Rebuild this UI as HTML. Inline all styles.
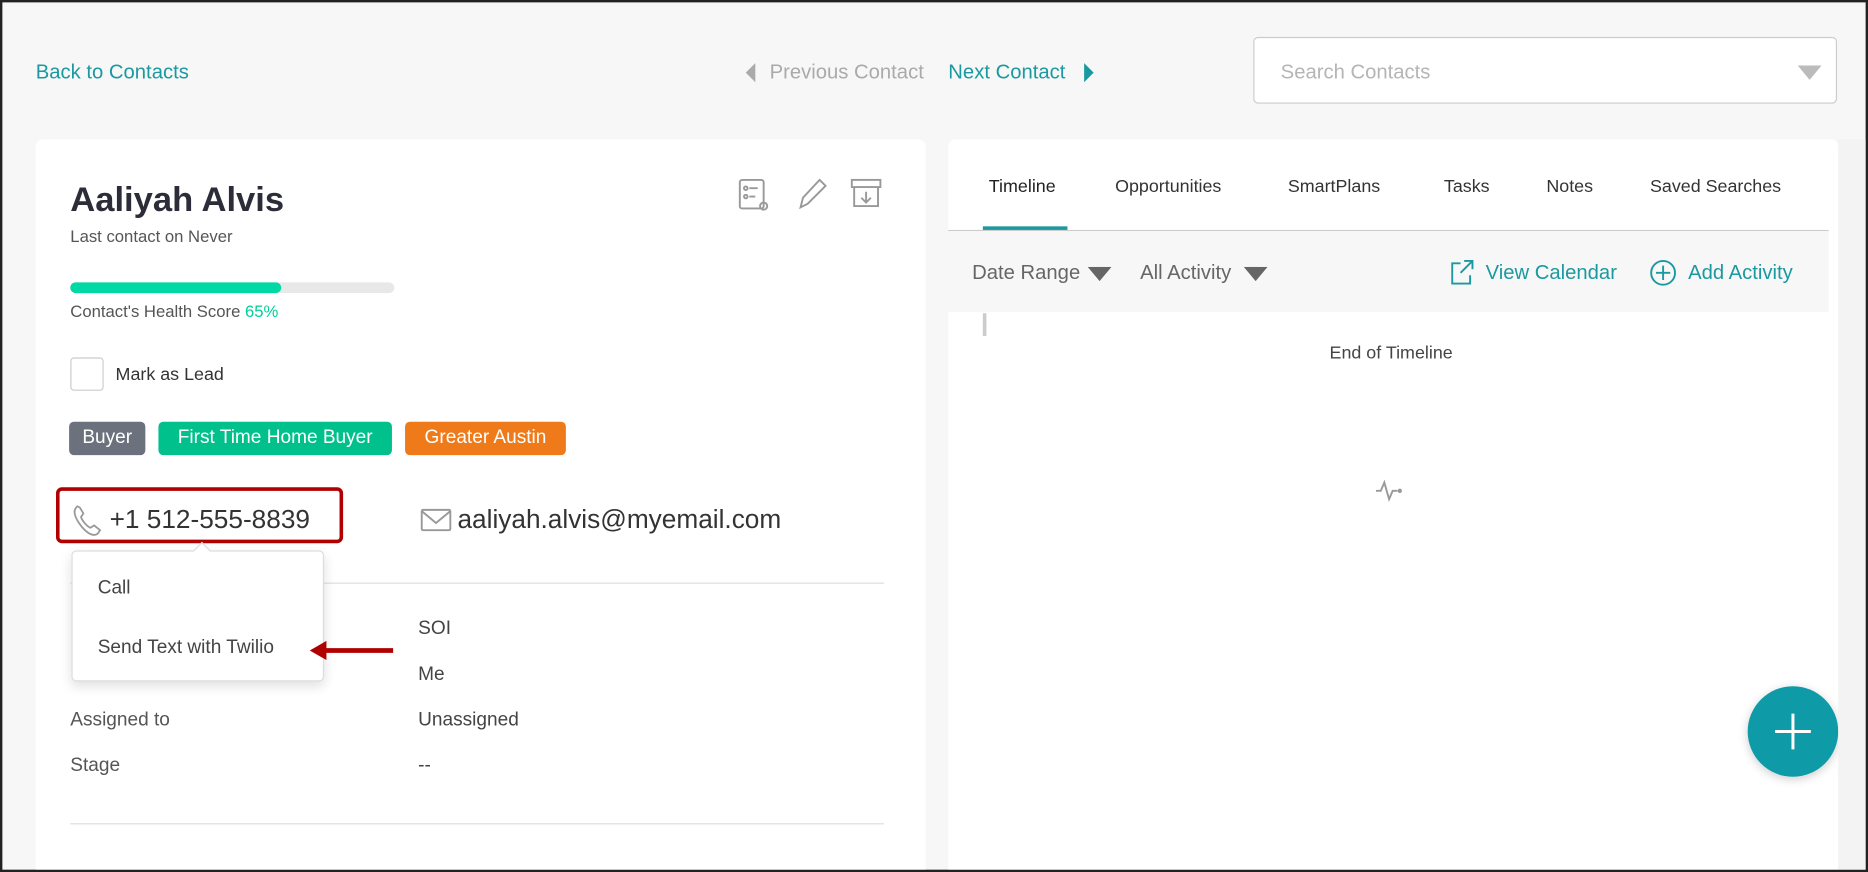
<!DOCTYPE html>
<html><head><meta charset="utf-8"><style>
html,body{margin:0;padding:0;width:1868px;height:872px;overflow:hidden;background:#f7f7f7}
#w{position:absolute;left:0;top:0;width:1568px;height:732px;transform:scale(1.19133);transform-origin:0 0;background:#f7f7f7;font-family:"Liberation Sans",sans-serif;box-sizing:border-box;border:2px solid #222;overflow:hidden}
.a{position:absolute;white-space:nowrap}
.t{color:#1a9aa0}
.card{position:absolute;background:#fff;border-radius:6px}
.tag{position:absolute;top:352px;height:28px;color:#fff;font-size:16px;border-radius:4px;box-sizing:border-box;display:flex;align-items:center;justify-content:center}
.lbl{font-size:16px;color:#555}
.tab{position:absolute;top:146px;font-size:15px;color:#333}
</style></head><body><div id="w">
<div class="a t" style="left:28px;top:49px;font-size:17px">Back to Contacts</div>
<svg class="a" style="left:622px;top:50px" width="12" height="18"><path d="M10 1L2 9l8 8z" fill="#aaa"/></svg>
<div class="a" style="left:644px;top:49px;font-size:17px;color:#aaa">Previous Contact</div>
<div class="a t" style="left:794px;top:49px;font-size:17px">Next Contact</div>
<svg class="a" style="left:906px;top:50px" width="12" height="18"><path d="M2 1l8 8-8 8z" fill="#1a9aa0"/></svg>
<div class="a" style="left:1050px;top:29px;width:490px;height:56px;background:#fff;border:1px solid #ccc;border-radius:4px;box-sizing:border-box"></div>
<div class="a" style="left:1073px;top:49px;font-size:17px;color:#b5b5b5">Search Contacts</div>
<svg class="a" style="left:1507px;top:53px" width="20" height="12"><path d="M0 0h20L10 12z" fill="#bbb"/></svg>

<div class="card" style="left:28px;top:115px;width:747px;height:640px"></div>
<div class="card" style="left:794px;top:115px;width:747px;height:640px"></div>

<div class="a" style="left:57px;top:150px;font-size:29px;font-weight:bold;color:#2d2d3a">Aaliyah Alvis</div>
<div class="a" style="left:57px;top:188px;font-size:14px;color:#555">Last contact on Never</div>
<svg class="a" style="left:614px;top:146px" width="140" height="32" fill="none" stroke="#999" stroke-width="1.6">
<rect x="5" y="3" width="20" height="24" rx="2"/><circle cx="10" cy="10" r="1.5"/><line x1="13" y1="10" x2="20" y2="10"/><circle cx="10" cy="17" r="1.5"/><line x1="13" y1="17" x2="18" y2="17"/><circle cx="25" cy="25" r="3"/>
<path d="M56 26l2-8 14-15 5 5-15 15z M56 26l6-3"/>
<rect x="99" y="3" width="24" height="6"/><path d="M101 9v16h20V9 M111 13v8 M107 18l4 4 4-4"/>
</svg>
<div class="a" style="left:57px;top:235px;width:272px;height:9px;background:#e8e8e8;border-radius:5px"></div>
<div class="a" style="left:57px;top:235px;width:177px;height:9px;background:#00d9a5;border-radius:5px"></div>
<div class="a" style="left:57px;top:251px;font-size:14px;color:#555">Contact's Health Score <span style="color:#00d095">65%</span></div>
<div class="a" style="left:57px;top:298px;width:28px;height:28px;border:1px solid #ccc;border-radius:3px;box-sizing:border-box"></div>
<div class="a" style="left:95px;top:304px;font-size:15px;color:#333">Mark as Lead</div>
<div class="tag" style="left:56px;width:64px;background:#6c727d">Buyer</div>
<div class="tag" style="left:131px;width:196px;background:#00c08b">First Time Home Buyer</div>
<div class="tag" style="left:338px;width:135px;background:#ef7a1a">Greater Austin</div>

<div class="a" style="left:45px;top:407px;width:241px;height:47px;border:3px solid #b00000;border-radius:5px;box-sizing:border-box"></div>
<svg class="a" style="left:58px;top:420px" width="28" height="30" fill="none" stroke="#999" stroke-width="1.5"><path d="M5 3c-4 3-3 8 2 15s11 11 15 8l2-3-5-4-3 2c-3-1-7-6-8-9l2-3-3-5z"/></svg>
<div class="a" style="left:90px;top:421px;font-size:22px;color:#333">+1 512-555-8839</div>
<svg class="a" style="left:350px;top:424px" width="28" height="22" fill="none" stroke="#999" stroke-width="1.6"><rect x="2" y="2" width="24" height="17" rx="1"/><path d="M2 3l12 10 12-10"/></svg>
<div class="a" style="left:382px;top:421px;font-size:22px;color:#333">aaliyah.alvis@myemail.com</div>

<div class="a" style="left:57px;top:487px;width:683px;height:1px;background:#ddd"></div>
<div class="a" style="left:57px;top:689px;width:683px;height:1px;background:#ddd"></div>
<div class="a lbl" style="left:349px;top:517px;color:#444">SOI</div>
<div class="a lbl" style="left:349px;top:556px;color:#444">Me</div>
<div class="a lbl" style="left:57px;top:594px">Assigned to</div>
<div class="a lbl" style="left:349px;top:594px;color:#444">Unassigned</div>
<div class="a lbl" style="left:57px;top:632px">Stage</div>
<div class="a lbl" style="left:349px;top:632px;color:#444">--</div>

<div class="a" style="left:58px;top:460px;width:212px;height:110px;background:#fff;border:1px solid #ddd;border-radius:4px;box-shadow:0 4px 10px rgba(0,0,0,.12);box-sizing:border-box"></div>
<div class="a" style="left:162px;top:455px;width:10px;height:10px;background:#fff;border-left:1px solid #ddd;border-top:1px solid #ddd;transform:rotate(45deg)"></div>
<div class="a" style="left:80px;top:483px;font-size:16px;color:#444">Call</div>
<div class="a" style="left:80px;top:533px;font-size:16px;color:#444">Send Text with Twilio</div>
<svg class="a" style="left:258px;top:534px" width="72" height="20"><path d="M0 10L14 2v6h56v4H14v6z" fill="#b00000"/></svg>

<div class="tab" style="left:828px;color:#222">Timeline</div>
<div class="tab" style="left:934px">Opportunities</div>
<div class="tab" style="left:1079px">SmartPlans</div>
<div class="tab" style="left:1210px">Tasks</div>
<div class="tab" style="left:1296px">Notes</div>
<div class="tab" style="left:1383px">Saved Searches</div>
<div class="a" style="left:794px;top:191px;width:739px;height:1px;background:#ccc"></div>
<div class="a" style="left:823px;top:188px;width:71px;height:3px;background:#1a9aa0"></div>
<div class="a" style="left:794px;top:192px;width:739px;height:68px;background:#f7f7f7"></div>
<div class="a" style="left:814px;top:217px;font-size:17px;color:#666">Date Range</div>
<svg class="a" style="left:911px;top:222px" width="20" height="12"><path d="M0 0h20L10 12z" fill="#666"/></svg>
<div class="a" style="left:955px;top:217px;font-size:17px;color:#666">All Activity</div>
<svg class="a" style="left:1042px;top:222px" width="20" height="12"><path d="M0 0h20L10 12z" fill="#666"/></svg>
<svg class="a" style="left:1214px;top:215px" width="22" height="24" fill="none" stroke="#1a9aa0" stroke-width="1.6"><path d="M10 4H3v17h15v-7 M13 2h7v7 M20 2L10 12"/></svg>
<div class="a t" style="left:1245px;top:217px;font-size:17px">View Calendar</div>
<svg class="a" style="left:1382px;top:215px" width="24" height="24" fill="none" stroke="#1a9aa0" stroke-width="1.6"><circle cx="12" cy="12" r="10"/><path d="M12 6v12M6 12h12"/></svg>
<div class="a t" style="left:1415px;top:217px;font-size:17px">Add Activity</div>
<div class="a" style="left:823px;top:261px;width:3px;height:19px;background:#ccc"></div>
<div class="a" style="left:1114px;top:286px;font-size:15px;color:#444">End of Timeline</div>
<svg class="a" style="left:1152px;top:400px" width="28" height="20" fill="none" stroke="#999" stroke-width="1.6"><path d="M1 10h4l3-7 4 14 3-7h4"/><circle cx="21" cy="10" r="1" fill="#999"/></svg>
<div class="a" style="left:1465px;top:574px;width:76px;height:76px;border-radius:50%;background:#0e9aa7;box-shadow:0 2px 8px rgba(0,0,0,.2)"></div>
<svg class="a" style="left:1484px;top:593px" width="38" height="38"><path d="M19 4v30M4 19h30" stroke="#fff" stroke-width="2.5"/></svg>
<div class="a" style="left:1541px;top:115px;width:25px;height:620px;background:#f3f3f3"></div>
</div></body></html>
